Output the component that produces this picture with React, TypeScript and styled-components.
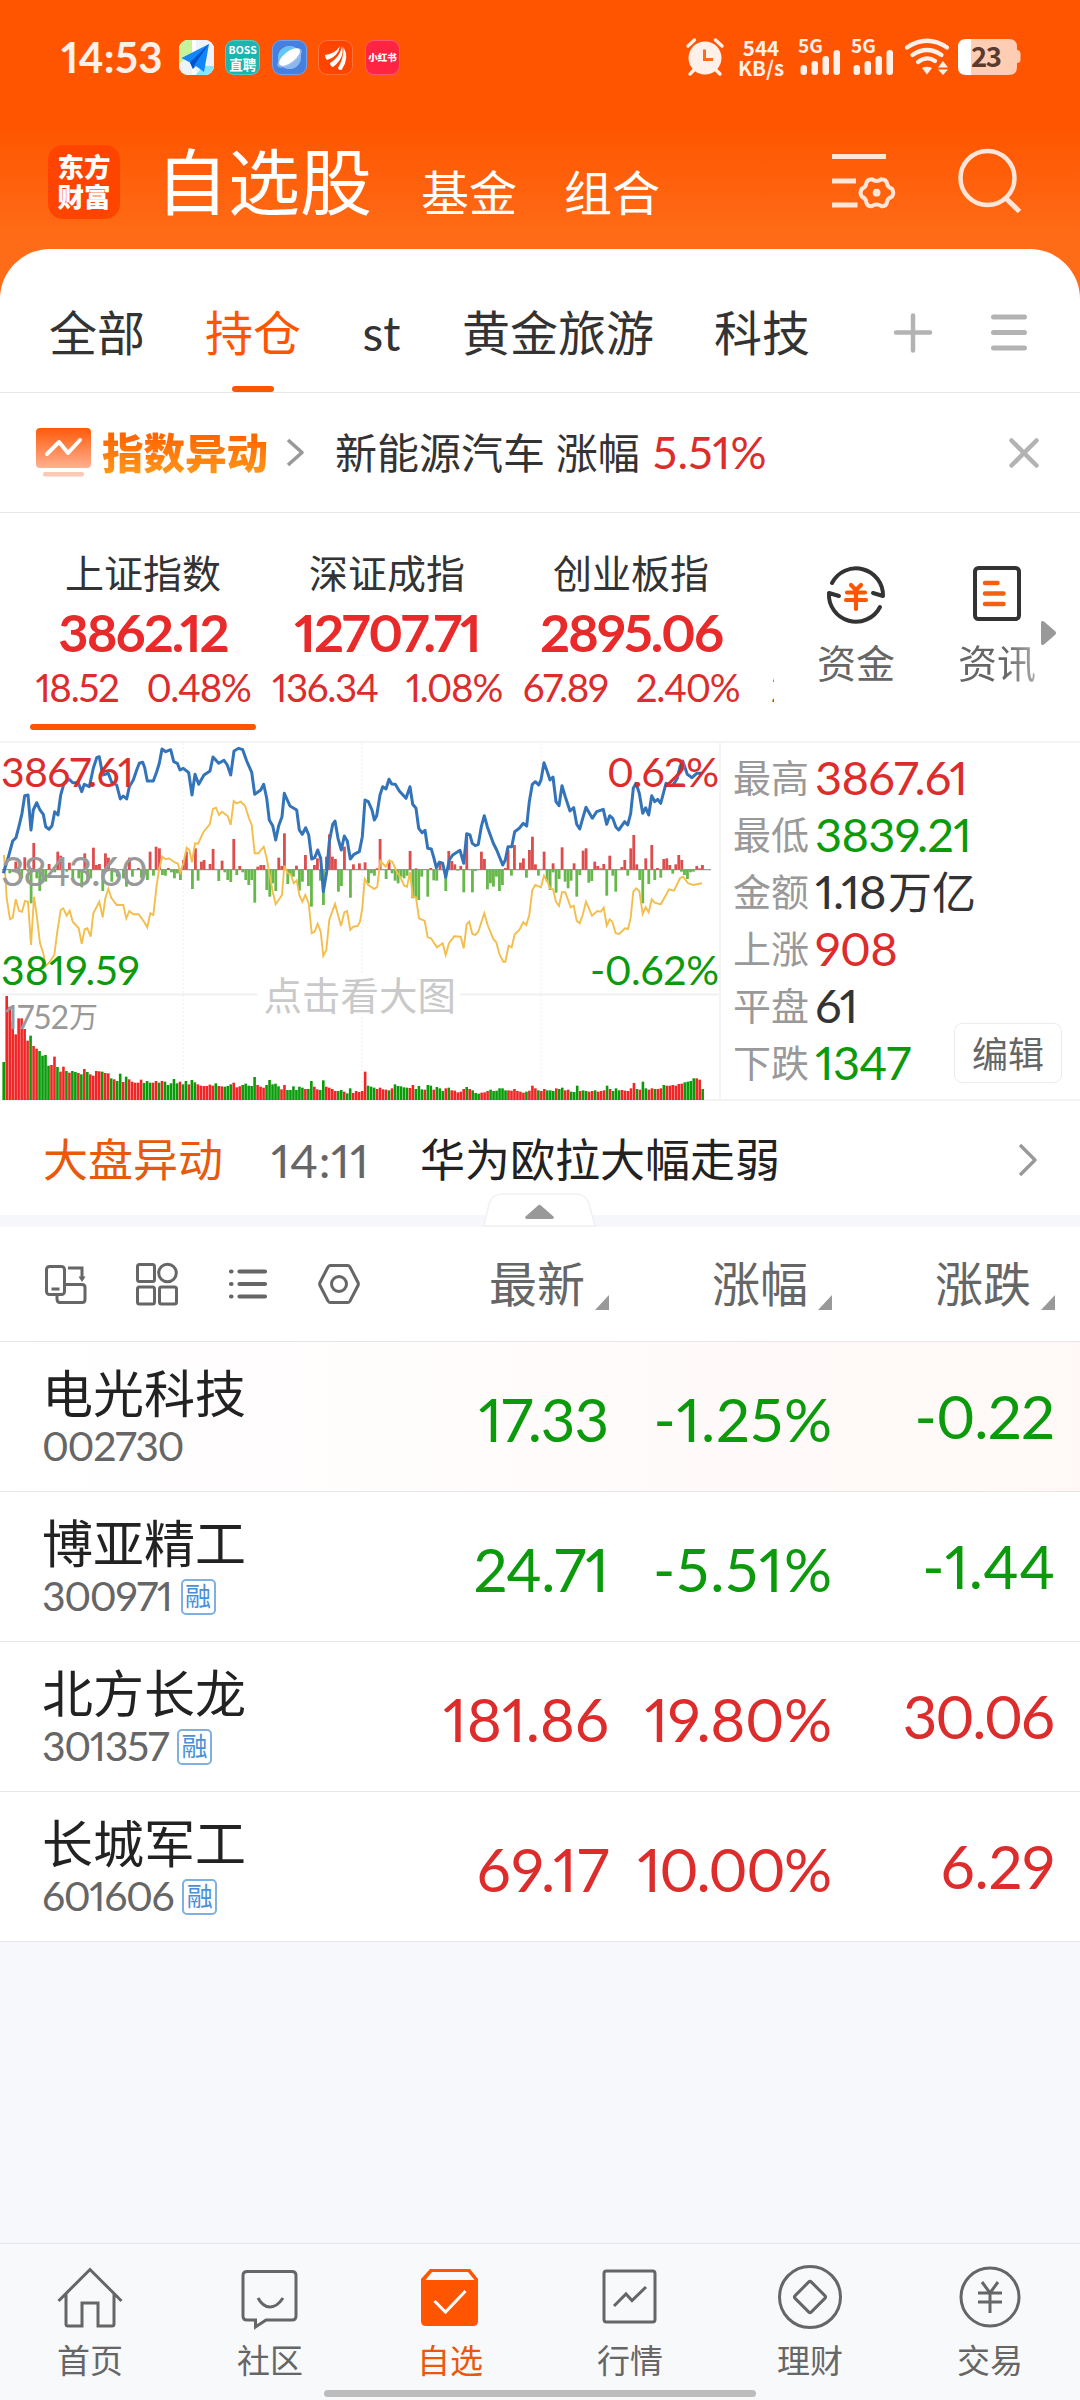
import React from "react";
import styled, { createGlobalStyle, css } from "styled-components";

const RED = "#dd2c2c";
const GREEN = "#0b9a0b";
const ORANGE = "#ff5500";
const INK = "#333333";
const MUTED = "#666666";
const PALE = "#999999";
const LINE = "#e6e6e8";

const GlobalStyle = createGlobalStyle`
  html, body { margin: 0; padding: 0; }
  body {
    width: 1080px;
    background: #f6f8fb;
    font-family: Lato, "Noto Sans CJK SC", sans-serif;
    font-feature-settings: "pnum" 1;
    color: ${INK};
  }
  *, *::before, *::after { box-sizing: border-box; }
  svg { display: block; flex: none; overflow: visible; }
`;

const Screen = styled.div`
  width: 1080px;
  height: 2400px;
  display: flex;
  flex-direction: column;
  overflow: hidden;
  background: #f6f8fb;
`;

const Top = styled.header`
  height: 300px;
  flex: none;
  background: linear-gradient(#ff5500 0, #ff5500 126px, #ff6c17 238px, #ff6c17 100%);
`;

/* ---------- status bar ---------- */

const StatusBar = styled.div`
  height: 114px;
  padding: 0 59px 0 61px;
  display: flex;
  align-items: center;
  justify-content: space-between;
  color: #fff0e9;
`;

const StatusSide = styled.div<{ $gap: number; $ml?: number }>`
  display: flex;
  align-items: center;
  gap: ${(p) => p.$gap}px;
  margin-left: ${(p) => p.$ml ?? 0}px;
`;

const Clock = styled.span`
  font-size: 42px;
  line-height: 48px;
  font-weight: 700;
  width: 106px;
  letter-spacing: 0.2px;
  padding-bottom: 1px;
`;

const AppIcon = styled.div<{ $bg: string }>`
  width: 35px;
  height: 35px;
  flex: none;
  border-radius: 9px;
  overflow: hidden;
  background: ${(p) => p.$bg};
  box-shadow: inset 0 0 0 1px rgba(255, 255, 255, 0.25);
  display: flex;
  flex-direction: column;
  align-items: center;
  justify-content: center;
  color: #fff;
  font-family: "Noto Sans CJK SC", sans-serif;
  white-space: nowrap;
`;

const TinyText = styled.span<{ $size: number; $lh: number; $w?: number }>`
  font-size: ${(p) => p.$size}px;
  line-height: ${(p) => p.$lh}px;
  font-weight: ${(p) => p.$w ?? 700};
`;

const NetSpeed = styled.div`
  width: 44px;
  margin-left: 15px;
  display: flex;
  flex-direction: column;
  align-items: center;
  font-family: "Noto Sans CJK SC", sans-serif;
  font-weight: 700;
  font-size: 20.5px;
  line-height: 20px;
`;

const StatusText = styled.text`
  font-family: "Noto Sans CJK SC", sans-serif;
  font-weight: 700;
`;

/* ---------- title bar ---------- */

const TitleBar = styled.div`
  height: 135px;
  padding: 0 58px 0 48px;
  display: flex;
  align-items: flex-start;
  color: #fff;
`;

const Logo = styled.div`
  width: 72px;
  height: 74px;
  margin-top: 31px;
  border-radius: 15px;
  background: #ff4400;
  display: flex;
  flex-direction: column;
  align-items: center;
  justify-content: center;
  font-family: "Noto Sans CJK SC", sans-serif;
  font-weight: 900;
  font-size: 26.5px;
  line-height: 30px;
  padding-bottom: 2px;
`;

const Heading = styled.h1`
  margin: 27px 0 0 36px;
  font-size: 72px;
  line-height: 80px;
  font-weight: 400;
`;

const TitleLink = styled.a<{ $ml: number }>`
  margin: 49px 0 0 ${(p) => p.$ml}px;
  font-size: 48px;
  line-height: 60px;
`;

const TitleActions = styled.div`
  margin-left: auto;
  padding-top: 34px;
  display: flex;
  gap: 63px;
`;

/* ---------- sheet ---------- */

const Sheet = styled.main`
  margin-top: -51px;
  flex: none;
  background: #fff;
  border-radius: 50px 50px 0 0;
`;

const Tabs = styled.nav`
  height: 144px;
  padding: 0 52px 0 49px;
  display: flex;
  align-items: flex-end;
  gap: 60px;
  border-bottom: 1px solid ${LINE};
`;

const Tab = styled.a<{ $active?: boolean; $w?: number }>`
  height: 111px;
  padding-top: 22px;
  ${(p) => p.$w && `width: ${p.$w}px;`}
  font-size: 48px;
  line-height: 60px;
  white-space: nowrap;
  color: ${(p) => (p.$active ? ORANGE : INK)};
  display: flex;
  flex-direction: column;
  align-items: center;
  ${(p) =>
    p.$active &&
    css`
      &::after {
        content: "";
        width: 42px;
        height: 6px;
        margin-top: auto;
        border-radius: 3px;
        background: ${ORANGE};
      }
    `}
`;

const TabTools = styled.div`
  margin-left: auto;
  height: 79px;
  display: flex;
  gap: 57px;
`;

const Notice = styled.section`
  height: 120px;
  padding: 0 40px 0 36px;
  display: flex;
  align-items: center;
  border-bottom: 1px solid ${LINE};
`;

const NoticeBrand = styled.strong`
  margin: 0 18px 0 9px;
  font-family: "Noto Sans CJK SC", sans-serif;
  font-size: 41.5px;
  line-height: 50px;
  font-weight: 900;
  padding-bottom: 4px;
  background: linear-gradient(#ff6600 20%, #ff9418 85%);
  -webkit-background-clip: text;
  background-clip: text;
  color: transparent;
`;

const NoticeText = styled.p`
  margin: 0 auto 0 31px;
  font-size: 42px;
  line-height: 60px;
  white-space: nowrap;
`;

const NoticeValue = styled.span`
  font-size: 45px;
  letter-spacing: 0.2px;
  margin-left: 13px;
  color: ${RED};
`;

/* ---------- indices ---------- */

const Indices = styled.section`
  height: 228px;
  padding-left: 21px;
  display: flex;
`;

const IndexStrip = styled.div`
  width: 753px;
  display: flex;
  overflow: hidden;
`;

const IndexCard = styled.div<{ $active?: boolean; $clip?: boolean }>`
  width: ${(p) => (p.$clip ? 21 : 244)}px;
  flex: none;
  padding-top: 32px;
  display: flex;
  flex-direction: column;
  align-items: ${(p) => (p.$clip ? "flex-start" : "center")};
  ${(p) =>
    p.$active &&
    css`
      &::after {
        content: "";
        width: 226px;
        height: 6px;
        margin-top: 13px;
        border-radius: 3px;
        background: ${ORANGE};
      }
    `}
`;

const IndexName = styled.span`
  height: 57px;
  font-size: 39px;
  line-height: 56px;
`;

const IndexValue = styled.span`
  height: 60px;
  font-size: 52.5px;
  line-height: 60px;
  font-weight: 700;
  letter-spacing: -2px;
  color: #e92a2a;
`;

const IndexChange = styled.span<{ $ml?: number }>`
  height: 48px;
  margin: 1px 0 0 ${(p) => p.$ml ?? 0}px;
  display: flex;
  gap: 28px;
  font-size: 38.5px;
  line-height: 48px;
  letter-spacing: -1.3px;
  color: ${RED};
`;

const Shortcut = styled.div<{ $ml: number }>`
  width: 80px;
  margin-left: ${(p) => p.$ml}px;
  padding-top: 51px;
  display: flex;
  flex-direction: column;
  align-items: center;
  flex: none;
`;

const ShortcutLabel = styled.span<{ $fade?: boolean }>`
  margin-top: 11px;
  font-size: 39px;
  line-height: 56px;
  color: ${MUTED};
  ${(p) =>
    p.$fade &&
    css`
      background: linear-gradient(90deg, ${MUTED} 60%, #aaa 100%);
      -webkit-background-clip: text;
      background-clip: text;
      color: transparent;
    `}
`;

const MoreArrow = styled.svg`
  margin: 106px 0 0 3px;
`;

/* ---------- chart ---------- */

const Market = styled.section`
  height: 360px;
  display: flex;
  border-top: 2px solid #f4f4f5;
  border-bottom: 2px solid #f4f4f5;
`;

const ChartPane = styled.div`
  width: 721px;
  border-right: 2px solid #f4f4f5;
  flex: none;
`;

const ChartText = styled.text`
  font-family: Lato, "Noto Sans CJK SC", sans-serif;
`;

const Stats = styled.dl`
  margin: 0;
  padding: 6px 0 0 12px;
  width: 220px;
  flex: none;
`;

const Stat = styled.div`
  height: 57px;
  display: flex;
  align-items: center;
  white-space: nowrap;
`;

const StatLabel = styled.dt`
  width: 82px;
  flex: none;
  font-size: 38px;
  line-height: 57px;
  color: ${PALE};
`;

const StatValue = styled.dd<{ $color: string }>`
  margin: 0;
  font-size: 47px;
  line-height: 57px;
  letter-spacing: -0.7px;
  color: ${(p) => p.$color};
`;

const Unit = styled.span`
  font-size: 44px;
  letter-spacing: 0;
  margin-left: 2px;
`;

const EditButton = styled.button`
  margin: auto 18px 16px auto;
  width: 108px;
  height: 60px;
  padding: 1px 0 0;
  border: 1px solid #ececee;
  border-radius: 8px;
  background: #fff;
  font: inherit;
  font-size: 36px;
  line-height: 56px;
  color: ${MUTED};
`;

const Flash = styled.section`
  position: relative;
  height: 126px;
  padding: 4px 43px 0 43px;
  display: flex;
  align-items: center;
  font-size: 45px;
  line-height: 60px;
  border-bottom: 12px solid #f5f7fa;
`;

const FlashTag = styled.span`
  width: 228px;
  color: #e8590c;
`;

const FlashTime = styled.span`
  width: 149px;
  font-size: 47px;
  letter-spacing: 0.5px;
  color: ${MUTED};
`;

const FlashText = styled.span`
  margin-right: auto;
  color: #222;
`;

const Handle = styled.svg`
  position: absolute;
  left: 482px;
  top: 91px;
`;

/* ---------- watch list ---------- */

const GridRow = styled.div`
  display: grid;
  grid-template-columns: 386px 223px 223px 223px;
`;

const ListHead = styled(GridRow)`
  height: 115px;
  align-items: center;
  border-bottom: 1px solid ${LINE};
`;

const ViewTools = styled.div`
  padding: 0 0 0 45px;
  display: flex;
  align-items: center;
  gap: 49px;
`;

const SortLabel = styled.div`
  display: flex;
  justify-content: flex-end;
  align-items: center;
  gap: 10px;
  font-size: 48px;
  line-height: 60px;
  color: ${MUTED};
`;

const SortMark = styled.svg`
  margin-top: 36px;
`;

const StockRow = styled(GridRow)<{ $tint?: boolean }>`
  height: 150px;
  border-bottom: 1px solid ${LINE};
  background: ${(p) => (p.$tint ? "linear-gradient(90deg, #fff 0%, #fff8f7 100%)" : "#fff")};
`;

const StockId = styled.div`
  padding: 22px 0 0 42px;
`;

const StockName = styled.div`
  font-size: 51px;
  line-height: 60px;
  color: #222;
`;

const StockCode = styled.div`
  height: 44px;
  display: flex;
  align-items: center;
  gap: 9px;
  font-size: 41px;
  line-height: 44px;
  letter-spacing: -1.4px;
  color: ${MUTED};
`;

const MarginTag = styled.span`
  width: 35px;
  height: 36px;
  margin-top: 1px;
  border: 2px solid #7fb0e0;
  border-radius: 5px;
  font-size: 26px;
  line-height: 31px;
  letter-spacing: 0;
  text-align: center;
  color: #4a90d6;
`;

const Figure = styled.div<{ $up: boolean; $track: number; $lift?: boolean }>`
  padding-top: ${(p) => (p.$lift ? 38 : 41)}px;
  margin-right: ${(p) => -p.$track}px;
  text-align: right;
  font-size: 60px;
  line-height: 72px;
  letter-spacing: ${(p) => p.$track}px;
  color: ${(p) => (p.$up ? RED : GREEN)};
`;

/* ---------- bottom navigation ---------- */

const BottomNav = styled.nav`
  margin-top: auto;
  height: 157px;
  flex: none;
  display: grid;
  grid-template-columns: repeat(6, 180px);
  border-top: 1px solid ${LINE};
  background: #f8f9fb;
  position: relative;
`;

const NavItem = styled.a<{ $active?: boolean }>`
  padding-top: 17px;
  display: flex;
  flex-direction: column;
  align-items: center;
  font-size: 33px;
  line-height: 44px;
  gap: 9px;
  color: ${(p) => (p.$active ? "#e8590c" : MUTED)};
`;

const HomeBar = styled.div`
  position: absolute;
  left: 324px;
  bottom: 3px;
  width: 432px;
  height: 7px;
  border-radius: 4px;
  background: #bcbcbc;
`;

/* ---------- intraday data, in thirds of a pixel ---------- */

const PRICE =
  "10,415 24,370 38,318 48,308 58,270 66,235 74,182 84,180 93,285 100,225 110,203 120,225 130,238 137,275 147,283 156,272 164,230 174,240 182,180 192,145 208,133 218,143 235,143 245,170 253,148 268,155 280,100 290,68 298,65 308,120 325,115 335,142 350,150 361,192 370,183 380,192 388,155 400,135 410,105 418,85 428,82 434,98 442,138 460,138 470,110 478,85 486,42 497,50 512,44 521,80 532,85 540,105 550,100 566,113 576,180 585,118 596,148 612,120 630,108 639,66 656,85 672,76 682,90 692,120 702,48 716,40 728,44 740,78 755,112 764,178 782,165 791,148 800,190 808,255 818,272 827,315 836,272 846,245 853,175 870,213 890,225 898,285 907,298 917,278 926,300 935,372 944,368 953,345 962,370 970,470 980,410 988,320 998,268 1005,258 1014,310 1024,345 1033,303 1042,318 1051,372 1062,358 1078,350 1087,305 1095,195 1105,200 1116,225 1123,255 1130,242 1140,180 1148,155 1158,162 1167,133 1175,147 1186,148 1198,168 1218,190 1230,155 1238,208 1248,220 1256,280 1266,293 1275,286 1283,340 1294,342 1302,370 1309,398 1318,382 1328,385 1337,427 1348,375 1358,360 1380,346 1391,385 1400,296 1410,300 1417,325 1426,332 1435,328 1444,275 1453,242 1462,275 1480,325 1490,345 1508,390 1516,375 1524,335 1535,335 1544,290 1558,280 1570,265 1580,273 1588,200 1597,148 1606,140 1616,150 1623,135 1632,83 1640,105 1650,135 1659,126 1668,200 1677,212 1686,152 1696,185 1710,228 1721,218 1730,268 1739,282 1748,250 1758,217 1777,250 1790,230 1810,223 1820,268 1829,242 1838,250 1848,277 1856,285 1874,260 1883,270 1892,235 1900,160 1908,145 1918,175 1928,235 1937,218 1946,240 1955,182 1964,200 1973,193 1982,205 1998,145 2018,152 2032,130 2040,95 2048,78 2062,118 2076,128 2090,115 2106,115";

const LEAD =
  "12,360 20,490 30,553 38,548 47,493 57,527 66,530 75,498 84,500 93,630 102,485 110,540 120,625 130,655 137,693 147,683 163,660 172,590 182,525 190,520 200,542 209,527 218,560 236,580 245,626 254,583 262,580 272,605 280,535 298,500 308,547 316,490 325,462 334,488 350,510 370,510 379,550 388,528 400,538 416,538 432,560 442,577 451,535 460,540 470,450 478,400 487,365 497,373 507,370 525,383 533,385 541,412 550,385 560,338 568,345 576,382 585,325 594,326 611,290 629,268 639,222 648,218 657,240 666,230 683,243 692,270 701,198 710,205 722,200 735,212 747,250 755,270 764,355 775,355 791,335 800,370 818,470 827,508 846,480 853,392 863,415 872,418 881,445 890,436 898,480 907,500 916,480 926,505 935,595 944,590 953,566 962,590 970,662 979,645 988,555 1005,507 1023,573 1033,532 1041,528 1051,585 1060,575 1073,573 1080,560 1087,520 1094,432 1105,450 1123,462 1132,455 1141,378 1157,395 1168,376 1177,380 1190,410 1200,425 1213,452 1221,455 1230,412 1238,485 1248,487 1257,550 1274,558 1283,607 1293,610 1311,637 1328,625 1337,660 1347,625 1363,604 1382,605 1391,640 1400,568 1408,560 1417,597 1426,600 1435,590 1453,535 1463,570 1480,612 1489,622 1498,657 1510,680 1516,680 1526,632 1535,637 1544,598 1558,585 1570,562 1579,570 1588,540 1597,465 1606,450 1623,457 1632,422 1641,437 1650,460 1659,463 1668,500 1677,513 1686,472 1696,472 1712,517 1721,512 1730,557 1739,565 1748,540 1758,500 1776,542 1792,528 1802,530 1811,518 1820,572 1829,553 1837,560 1847,595 1858,597 1875,580 1884,582 1892,548 1900,470 1909,460 1918,468 1928,537 1937,517 1946,532 1955,493 1964,503 1982,508 1995,485 2007,463 2022,467 2040,430 2049,425 2064,445 2080,450 2106,445";

const UPS =
  "47,380 74,367 101,324 147,387 173,350 182,362 208,383 254,355 280,338 289,390 298,387 316,355 325,368 388,368 415,399 450,350 468,335 478,340 505,399 550,375 559,350 586,340 604,380 612,375 630,387 639,342 666,377 701,312 719,393 773,395 782,390 791,390 836,368 845,393 853,295 889,392 916,360 943,390 952,370 979,365 988,298 997,365 1006,372 1033,335 1060,388 1078,385 1095,382 1131,400 1140,312 1167,378 1230,348 1248,400 1292,399 1320,385 1346,348 1355,378 1364,388 1382,393 1400,305 1444,350 1453,372 1516,399 1524,345 1543,330 1561,383 1570,370 1588,345 1597,305 1606,388 1632,350 1659,385 1686,337 1722,385 1749,347 1758,340 1784,380 1793,393 1802,400 1811,387 1829,362 1865,396 1874,375 1892,340 1901,300 1910,388 1937,370 1955,330 1972,399 1991,372 2000,370 2009,390 2027,388 2036,360 2045,375 2090,393 2099,400 2107,390";

const DOWNS =
  "29,415 56,415 65,430 84,410 93,505 110,430 119,468 128,425 137,440 164,412 200,410 218,430 236,430 245,457 263,435 272,430 308,468 335,440 344,412 352,425 370,430 379,455 397,425 424,428 433,418 442,435 460,422 487,420 496,422 514,412 523,430 532,415 541,435 577,462 594,437 656,438 674,412 683,435 692,441 710,420 728,412 737,435 746,450 755,435 764,503 800,465 809,485 818,445 827,468 863,447 871,420 880,425 898,467 907,440 925,453 934,515 961,437 970,510 1015,470 1024,453 1051,488 1105,445 1114,415 1123,422 1158,432 1176,415 1185,437 1194,445 1203,425 1212,430 1221,422 1238,490 1247,487 1256,495 1265,425 1283,485 1301,436 1310,437 1337,468 1373,407 1391,472 1417,472 1426,408 1462,463 1471,445 1480,455 1489,425 1498,468 1507,450 1534,422 1579,428 1615,422 1641,440 1650,465 1659,412 1668,473 1677,432 1695,440 1704,460 1713,437 1730,485 1739,420 1766,443 1775,438 1820,482 1838,422 1847,470 1883,422 1919,435 1928,505 1946,447 1964,435 1982,428 2018,416 2044,410 2053,420 2062,432 2071,412 2080,410";

const VOLUME = [
  981, 783, 815, 860, 898, 850, 850, 882, 917, 902, 933, 941, 948, 962, 960, 992, 990, 965, 996, 1010, 995, 1008, 1013,
  1008, 1011, 1014, 1018, 1002, 1011, 1018, 1022, 1008, 1009, 1010, 1014, 1015, 1030, 1033, 1038, 1016, 1041, 1025,
  1033, 1040, 1043, 1043, 1034, 1044, 1038, 1043, 1043, 1038, 1043, 1038, 1040, 1050, 1045, 1032, 1045, 1040, 1048,
  1038, 1048, 1035, 1042, 1048, 1052, 1053, 1053, 1049, 1052, 1045, 1053, 1054, 1055, 1053, 1048, 1043, 1057, 1054,
  1050, 1046, 1052, 1053, 1026, 1050, 1055, 1058, 1050, 1035, 1048, 1046, 1054, 1063, 1050, 1065, 1065, 1054, 1065,
  1055, 1058, 1062, 1062, 1038, 1055, 1063, 1065, 1036, 1055, 1058, 1062, 1068, 1068, 1065, 1070, 1075, 1060, 1074,
  1068, 1071, 1068, 1010, 1052, 1055, 1058, 1062, 1058, 1063, 1064, 1066, 1060, 1048, 1053, 1054, 1057, 1058, 1059,
  1050, 1062, 1053, 1063, 1064, 1050, 1052, 1064, 1056, 1060, 1068, 1060, 1058, 1066, 1067, 1072, 1070, 1062,
  1056, 1062, 1066, 1074, 1076, 1073, 1072, 1068, 1064, 1068, 1067, 1060, 1060, 1066, 1066, 1067, 1062, 1068,
  1070, 1073, 1070, 1067, 1052, 1060, 1066, 1068, 1062, 1066, 1066, 1068, 1060, 1062, 1058, 1066, 1064, 1070, 1071,
  1052, 1068, 1066, 1068, 1070, 1068, 1066, 1070, 1068, 1066, 1052, 1062, 1068, 1060, 1066, 1065, 1067, 1068,
  1060, 1044, 1062, 1064, 1040, 1060, 1064, 1060, 1062, 1062, 1060, 1050, 1052, 1052, 1050, 1052, 1047, 1046, 1042,
  1040, 1038, 1030, 1030, 1034, 1062,
];

/* run lengths of falling (g) and rising (r) minutes */
const VOLUME_RUNS =
  "g1 r8 g1 r2 g4 r2 g1 r2 g1 r1 g2 r1 g1 r1 g1 r4 g1 r2 g1 r1 g2 r1 g1 r5 g3 r2 g1 r1 g5 r1 g2 r1 g2 r6 g1 r2 g3 r3 g5 r3 g5 r2 g6 r1 g2 r2 g2 r4 g2 r1 g2 r5 g3 r4 g1 r1 g5 r2 g3 r1 g2 r1 g3 r1 g1 r5 g1 r1 g3 r3 g6 r6 g1 r3 g1 r2 g3 r1 g2 r2 g3 r1 g2 r2 g1 r3 g1 r1 g3 r5 g1 r1 g2 r2 g1 r2 g1 r6 g4 r2 g1";

const VOLUME_SIDE = VOLUME_RUNS.split(" ")
  .map((run) => run[0].repeat(Number(run.slice(1))))
  .join("");

const parse = (s: string) => s.split(" ").map((p) => p.split(",").map((n) => Number(n) / 3));
const line = (s: string) =>
  parse(s)
    .map(([x, y]) => `${x.toFixed(1)},${(y - 8).toFixed(1)}`)
    .join(" ");

const ZERO = 126.6;

const IntradayChart = () => (
  <svg width="719" height="356" viewBox="0 0 719 356">
    <g stroke="#eeeeef" strokeDasharray="2 2">
      <path d="M183 0V356M362 0V232M362 274V356M541 0V356" />
    </g>
    <path d="M1 251.5H257M460 251.5H719" stroke="#f0f0f1" strokeWidth="2" />
    <path d={`M2 ${ZERO}H711`} stroke="#999" strokeWidth="1.4" />
    {parse(UPS).map(([x, y]) => (
      <rect key={x} x={x - 1.3} y={y - 8} width="2.8" height={ZERO - y + 8} fill="#de4c4c" />
    ))}
    {parse(DOWNS).map(([x, y]) => (
      <rect key={x} x={x - 1.3} y={ZERO} width="2.8" height={y - 8 - ZERO} fill="#66b84a" />
    ))}
    {VOLUME.map((top, i) => {
      const y = top / 3 - 8;
      return (
        <rect
          key={i}
          x={2.4 + i * 2.987}
          y={y}
          width="2.6"
          height={357 - y}
          fill={VOLUME_SIDE[i] === "g" ? "#089c08" : "#f02626"}
        />
      );
    })}
    <polyline points={line(LEAD)} fill="none" stroke="#f3be4c" strokeWidth="1.9" />
    <polyline points={line(PRICE)} fill="none" stroke="#3373b9" strokeWidth="3" strokeLinejoin="round" />
    <ChartText x="1" y="43.5" fontSize="41" fill={RED} textLength="133">3867.61</ChartText>
    <ChartText x="1" y="142.5" fontSize="41" fill={PALE} textLength="147">3843.60</ChartText>
    <ChartText x="1" y="242" fontSize="41" fill={GREEN} textLength="139">3819.59</ChartText>
    <ChartText x="607" y="43.5" fontSize="41" fill={RED} textLength="112">0.62%</ChartText>
    <ChartText x="590" y="242" fontSize="41" fill={GREEN} textLength="129">-0.62%</ChartText>
    <ChartText x="5" y="285.5" fontSize="32" fill={PALE} textLength="64">1752</ChartText>
    <ChartText x="69" y="284.5" fontSize="29" fill={PALE}>万</ChartText>
    <ChartText x="263.5" y="267" fontSize="38.5" fill="#c9c9c9">点击看大图</ChartText>
  </svg>
);

/* ---------- icons ---------- */

const SignalIcon = () => (
  <svg width="44" height="38" viewBox="0 0 44 38" fill="#fff0e9">
    <StatusText x="0" y="15" fontSize="19">5G</StatusText>
    <rect x="2.5" y="27" width="6.5" height="10" rx="3" />
    <rect x="13.5" y="23" width="6.5" height="14" rx="3" />
    <rect x="24.5" y="18" width="6.5" height="19" rx="3" />
    <rect x="35.5" y="12" width="6.5" height="25" rx="3" />
  </svg>
);

const AlarmIcon = () => (
  <svg width="38" height="38" viewBox="0 0 38 38">
    <circle cx="19" cy="20" r="16.5" fill="#fff0e9" />
    <path d="M2 8L8.5 2M36 8L29.5 2M4 36L9 31M34 36L29 31" stroke="#fff0e9" strokeWidth="3.4" strokeLinecap="round" />
    <path d="M18.5 11.500V21.500H27" stroke="#ff6a20" strokeWidth="3" fill="none" />
  </svg>
);

const WifiIcon = () => (
  <svg width="46" height="38" viewBox="0 0 46 38" fill="none" stroke="#fff0e9" strokeWidth="4.200" strokeLinecap="round">
    <path d="M3 9.500Q23 -4 43 9.500M8.500 17Q23 7 37.500 17M14 24Q23 17.500 31 23" />
    <path d="M18 30Q23 27.500 28 30L23 36.500Z" fill="#fff0e9" stroke="none" />
    <path d="M39 23L44 29.500H34ZM39 37L34 31.500H44Z" fill="#fff0e9" stroke="none" />
  </svg>
);

const BatteryIcon = () => (
  <svg width="64" height="38" viewBox="0 0 64 38">
    <path d="M9 1H52Q60 1 60 9V12Q63.500 12 63.500 16V22Q63.500 25 60 25V29Q60 37 52 37H9Z" fill="#ffccb4" />
    <path d="M9 1H14V37H9Q1 37 1 29V9Q1 1 9 1Z" fill="#fff" />
    <StatusText x="14" y="29" fontSize="27.500" fill="#5a3a2c" textLength="31">23</StatusText>
  </svg>
);

const MapAppIcon = () => (
  <svg width="35" height="35" viewBox="0 0 35 35">
    <rect width="35" height="35" fill="#eef3f7" />
    <path d="M0 0H13V14L0 24Z" fill="#c6f39a" />
    <path d="M24 26H35V35H17Z" fill="#86e6ff" />
    <path d="M13 0H17V35H13Z" fill="#fff" />
    <path d="M30 4L2.500 18L11 22.500L14 29L17 26L25 32Z" fill="#1186fb" />
    <path d="M30 4L11 22.500L14 29L16 24Z" fill="#0553c8" />
  </svg>
);

const PlanetAppIcon = () => (
  <svg width="35" height="35" viewBox="0 0 35 35">
    <circle cx="17.500" cy="17.500" r="11.500" fill="#8cb8ee" />
    <path d="M6.500 20A11.500 11.500 0 0 1 28 12.500Z" fill="#62c8f2" />
    <ellipse cx="17.500" cy="18" rx="14.500" ry="6" transform="rotate(-35 17.500 18)" fill="#a4c4f0" opacity=".7" />
    <ellipse cx="17.500" cy="17" rx="12.500" ry="5.500" transform="rotate(-38 17.500 17)" fill="#fff" />
  </svg>
);

const WingAppIcon = () => (
  <svg width="35" height="35" viewBox="0 0 35 35" fill="#fff">
    <path d="M7 15Q17 14 22 6Q20 17 9 20Q7 18 7 15Z" />
    <path d="M12 23Q22 17 24 6Q27 18 15 27Q12 26 12 23Z" />
    <path d="M20 28Q26 18 25.500 7Q32 18 23.500 30Q20 30 20 28Z" />
  </svg>
);

const FilterIcon = () => (
  <svg width="64" height="60" viewBox="0 0 64 60" fill="none" stroke="#ffe6d9" strokeWidth="5">
    <path d="M1 8.500H55M1 33H25M1 57H26.500" />
    <path
      d="M41 31Q46 34.500 51 31Q56 31 57 36Q57 39 62 41Q64.500 45 62 49Q57 51 57 54Q56 59.500 51 59Q46 55.500 41 59Q36 59.500 35 54Q35 51 30.500 49Q28 45 30.500 41Q35 39 35 36Q36 31 41 31Z"
      transform="translate(1.500 1.500) scale(.96)"
      strokeWidth="4.200"
      strokeLinejoin="round"
    />
    <circle cx="45.600" cy="44.700" r="3.900" fill="#ffe6d9" stroke="none" />
  </svg>
);

const SearchIcon = () => (
  <svg width="64" height="66" viewBox="0 0 64 66" fill="none" stroke="#ffe6d9" strokeWidth="4.500">
    <ellipse cx="29.500" cy="30" rx="27" ry="27" />
    <path d="M47 49.500L61.500 63.500" strokeWidth="5" />
  </svg>
);

const NoticeIcon = () => (
  <svg width="57" height="52" viewBox="0 0 57 52">
    <defs>
      <linearGradient id="nb" x1="0" y1="0" x2="0" y2="1">
        <stop offset="0" stopColor="#ff5a0a" />
        <stop offset="1" stopColor="#ffb090" />
      </linearGradient>
    </defs>
    <rect x="0" y="1" width="55" height="40" rx="4" fill="url(#nb)" />
    <path d="M11 27L23 15L32 26L44 13" fill="none" stroke="#fff" strokeWidth="4" strokeLinecap="round" strokeLinejoin="round" />
    <rect x="7" y="45" width="41" height="4.500" rx="2" fill="#fbcab4" />
  </svg>
);

const Chevron = ({ w, h, sw }: { w: number; h: number; sw: number }) => (
  <svg width={w} height={h} viewBox={`0 0 ${w} ${h}`} fill="none" stroke="#999" strokeWidth={sw} strokeLinejoin="round">
    <path d={`M2 2L${w - 2} ${h / 2}L2 ${h - 2}`} />
  </svg>
);

const stroke = { fill: "none", stroke: MUTED, strokeWidth: 3 } as const;

type Fig = [string, number];
const STOCKS: { name: string; code: string; tag: boolean; up: boolean; figures: Fig[] }[] = [
  { name: "电光科技", code: "002730", tag: false, up: false, figures: [["17.33", -1], ["-1.25%", 0.7], ["-0.22", -0.7]] },
  { name: "博亚精工", code: "300971", tag: true, up: false, figures: [["24.71", -0.7], ["-5.51%", 1.2], ["-1.44", 0.2]] },
  { name: "北方长龙", code: "301357", tag: true, up: true, figures: [["181.86", 0], ["19.80%", -0.5], ["30.06", -2.1]] },
  { name: "长城军工", code: "601606", tag: true, up: true, figures: [["69.17", 0.5], ["10.00%", -1.7], ["6.29", -0.2]] },
];

const App = () => (
  <Screen>
    <GlobalStyle />
    <Top>
      <StatusBar>
        <StatusSide $gap={11.6}>
          <Clock>14:53</Clock>
          <AppIcon $bg="#eef3f7"><MapAppIcon /></AppIcon>
          <AppIcon $bg="#1bb5b0">
            <TinyText $size={10.5} $lh={13}>BOSS</TinyText>
            <TinyText $size={13.5} $lh={16}>直聘</TinyText>
          </AppIcon>
          <AppIcon $bg="#4580e0"><PlanetAppIcon /></AppIcon>
          <AppIcon $bg="#ff4400"><WingAppIcon /></AppIcon>
          <AppIcon $bg="#ff2442"><TinyText $size={9.5} $lh={14} $w={900}>小红书</TinyText></AppIcon>
        </StatusSide>
        <StatusSide $gap={0}>
          <AlarmIcon />
          <NetSpeed>
            <span>544</span>
            <span>KB/s</span>
          </NetSpeed>
          <StatusSide $gap={9} $ml={15}>
            <SignalIcon />
            <SignalIcon />
            <WifiIcon />
          </StatusSide>
          <StatusSide $gap={0} $ml={7}>
            <BatteryIcon />
          </StatusSide>
        </StatusSide>
      </StatusBar>
      <TitleBar>
        <Logo>
          <span>东方</span>
          <span>财富</span>
        </Logo>
        <Heading>自选股</Heading>
        <TitleLink $ml={49}>基金</TitleLink>
        <TitleLink $ml={47}>组合</TitleLink>
        <TitleActions>
          <FilterIcon />
          <SearchIcon />
        </TitleActions>
      </TitleBar>
    </Top>

    <Sheet>
      <Tabs>
        <Tab>全部</Tab>
        <Tab $active>持仓</Tab>
        <Tab $w={41}>st</Tab>
        <Tab>黄金旅游</Tab>
        <Tab>科技</Tab>
        <TabTools>
          <svg width="40" height="40" viewBox="0 0 40 40" stroke="#b3b3b3" strokeWidth="4.500" strokeLinecap="round">
            <path d="M20 2.500V37.500M3 19.500H37" />
          </svg>
          <svg width="38" height="40" viewBox="0 0 38 40" stroke="#b3b3b3" strokeWidth="5" strokeLinecap="round">
            <path d="M3.500 4H34.500M3.500 19.500H34.500M3.500 35H34.500" />
          </svg>
        </TabTools>
      </Tabs>

      <Notice>
        <NoticeIcon />
        <NoticeBrand>指数异动</NoticeBrand>
        <Chevron w={18} h={29} sw={3.6} />
        <NoticeText>
          新能源汽车 涨幅<NoticeValue>5.51%</NoticeValue>
        </NoticeText>
        <svg width="32" height="32" viewBox="0 0 32 32" stroke="#b3b3b3" strokeWidth="4.500" strokeLinecap="round">
          <path d="M3.500 3.500L28.500 28.500M28.500 3.500L3.500 28.500" />
        </svg>
      </Notice>

      <Indices>
        <IndexStrip>
          <IndexCard $active>
            <IndexName>上证指数</IndexName>
            <IndexValue>3862.12</IndexValue>
            <IndexChange><span>18.52</span><span>0.48%</span></IndexChange>
          </IndexCard>
          <IndexCard>
            <IndexName>深证成指</IndexName>
            <IndexValue>12707.71</IndexValue>
            <IndexChange><span>136.34</span><span>1.08%</span></IndexChange>
          </IndexCard>
          <IndexCard>
            <IndexName>创业板指</IndexName>
            <IndexValue>2895.06</IndexValue>
            <IndexChange><span>67.89</span><span>2.40%</span></IndexChange>
          </IndexCard>
          <IndexCard $clip>
            <IndexName />
            <IndexValue />
            <IndexChange $ml={18}>2</IndexChange>
          </IndexCard>
        </IndexStrip>
        <Shortcut $ml={42}>
          <svg width="60" height="60" viewBox="0 0 60 60" fill="none" stroke="#333" strokeWidth="4" strokeLinecap="round" strokeLinejoin="round">
            <path d="M6 19A27 27 0 0 1 57 32L47 29" />
            <path d="M54 43A27 27 0 0 1 3 29L13 32" />
            <path d="M25 21L30 26L35 21M21 28.500H39M20 36H40M30 27V45" stroke={ORANGE} strokeWidth="4.200" />
          </svg>
          <ShortcutLabel>资金</ShortcutLabel>
        </Shortcut>
        <Shortcut $ml={61}>
          <svg width="50" height="60" viewBox="0 0 50 60" fill="none" stroke="#333" strokeWidth="4" strokeLinecap="round">
            <rect x="3" y="4" width="44" height="51" rx="3.500" />
            <path d="M13 19H25.500M13 29.500H31.500M13 40H31.500" stroke="#f26015" strokeWidth="4.500" />
          </svg>
          <ShortcutLabel $fade>资讯</ShortcutLabel>
        </Shortcut>
        <MoreArrow width="17" height="28" viewBox="0 0 17 28">
          <path d="M1 4Q1 1 4 2.500L15 12Q17 14 15 16L4 25.500Q1 27 1 24Z" fill="#999" />
        </MoreArrow>
      </Indices>

      <Market>
        <ChartPane><IntradayChart /></ChartPane>
        <Stats>
          <Stat><StatLabel>最高</StatLabel><StatValue $color={RED}>3867.61</StatValue></Stat>
          <Stat><StatLabel>最低</StatLabel><StatValue $color={GREEN}>3839.21</StatValue></Stat>
          <Stat><StatLabel>金额</StatLabel><StatValue $color={INK}>1.18<Unit>万亿</Unit></StatValue></Stat>
          <Stat><StatLabel>上涨</StatLabel><StatValue $color={RED}>908</StatValue></Stat>
          <Stat><StatLabel>平盘</StatLabel><StatValue $color={INK}>61</StatValue></Stat>
          <Stat><StatLabel>下跌</StatLabel><StatValue $color={GREEN}>1347</StatValue></Stat>
        </Stats>
        <EditButton>编辑</EditButton>
      </Market>

      <Flash>
        <FlashTag>大盘异动</FlashTag>
        <FlashTime>14:11</FlashTime>
        <FlashText>华为欧拉大幅走弱</FlashText>
        <Chevron w={19} h={34} sw={3.4} />
        <Handle width="116" height="36" viewBox="0 0 116 36">
          <path d="M2 34L7 12Q10 2 20 2H94Q104 2 107 12L113 34Z" fill="#fff" stroke="#f0f1f3" strokeWidth="1.500" />
          <path d="M43 25L56 13.500Q57.500 12 59 13.500L72 25Q72 27 70 27H45Q43 27 43 25Z" fill="#999" />
        </Handle>
      </Flash>

      <ListHead>
        <ViewTools>
          <svg width="42" height="42" viewBox="0 0 42 42" {...stroke}>
            <rect x="1.500" y="3.500" width="18" height="28" rx="3" />
            <path d="M6.500 26H14.500M12 33V36Q12 39.500 15 39.500H37Q40 39.500 40 36.500V24.500Q40 21.500 37 21.500H20M23 5H37V15" />
            <path d="M33.500 13.500H40.500L37 19Z" fill={MUTED} stroke="none" />
          </svg>
          <svg width="42" height="44" viewBox="0 0 42 44" {...stroke}>
            <rect x="1.500" y="2.500" width="17" height="17" rx="2" />
            <circle cx="31.500" cy="11" r="8.800" />
            <rect x="1.500" y="25" width="17" height="17" rx="2" />
            <rect x="23.500" y="25" width="17" height="17" rx="2" />
          </svg>
          <svg width="42" height="42" viewBox="0 0 42 42" {...stroke} strokeWidth={4.2} strokeLinecap="round">
            <path d="M4 8.500H4.500M12.500 8.500H38M4 21H4.500M12.500 21H38M4 33.500H4.500M12.500 33.500H38" />
          </svg>
          <svg width="42" height="42" viewBox="0 0 42 42" {...stroke}>
            <path d="M12.500 2.500H29.500Q31 2.500 32 4L40 19.500Q40.700 21 40 22.500L32 38Q31 39.500 29.500 39.500H12.500Q11 39.500 10 38L2 22.500Q1.300 21 2 19.500L10 4Q11 2.500 12.500 2.500Z" />
            <circle cx="21" cy="21" r="7.500" />
          </svg>
        </ViewTools>
        {["最新", "涨幅", "涨跌"].map((label) => (
          <SortLabel key={label}>
            {label}
            <SortMark width="14" height="15" viewBox="0 0 14 15"><path d="M14 0V15H0Z" fill={PALE} /></SortMark>
          </SortLabel>
        ))}
      </ListHead>

      {STOCKS.map((s, i) => (
        <StockRow key={s.code} $tint={i === 0}>
          <StockId>
            <StockName>{s.name}</StockName>
            <StockCode>
              {s.code}
              {s.tag && <MarginTag>融</MarginTag>}
            </StockCode>
          </StockId>
          {s.figures.map(([value, track], k) => (
            <Figure key={value} $up={s.up} $track={track} $lift={k === 2}>{value}</Figure>
          ))}
        </StockRow>
      ))}
    </Sheet>

    <BottomNav>
      <NavItem>
        <svg width="66" height="68" viewBox="0 0 66 68" {...stroke}>
          <path d="M1.500 40L33 8.500L64.500 40M9 33V63Q9 65 11 65H25V42H41V65H55Q57 65 57 63V33" />
        </svg>
        首页
      </NavItem>
      <NavItem>
        <svg width="66" height="68" viewBox="0 0 66 68" {...stroke}>
          <path d="M9 10.500H55Q59 10.500 59 14.500V55Q59 59 55 59H29L18.500 66V59H10Q6 59 6 55V14.500Q6 10.500 10 10.500" />
          <path d="M21 37Q26 46 33 46T46 37" />
        </svg>
        社区
      </NavItem>
      <NavItem $active>
        <svg width="66" height="68" viewBox="0 0 66 68">
          <path d="M13 8H53L61 18V60Q61 65 56 65H9Q4 65 4 60V18Z" fill={ORANGE} />
          <path d="M15 11H51L57.500 19H8.500Z" fill="#f8f9fb" />
          <path d="M17.500 40L28.500 51L48.500 30" fill="none" stroke="#fff" strokeWidth="3" />
        </svg>
        自选
      </NavItem>
      <NavItem>
        <svg width="66" height="68" viewBox="0 0 66 68" {...stroke}>
          <rect x="7" y="10" width="51" height="51" rx="2.500" />
          <path d="M17 45L29 33L35 39.500L49 26" />
        </svg>
        行情
      </NavItem>
      <NavItem>
        <svg width="66" height="68" viewBox="0 0 66 68" {...stroke}>
          <circle cx="33" cy="36" r="30.500" />
          <rect x="21.500" y="24.500" width="23" height="23" rx="2" transform="rotate(45 33 36)" />
        </svg>
        理财
      </NavItem>
      <NavItem>
        <svg width="66" height="68" viewBox="0 0 66 68" {...stroke}>
          <circle cx="33" cy="36" r="29" />
          <path d="M25 21L33 32L41 21M21 32H45M21 41H45M33 32V52" />
        </svg>
        交易
      </NavItem>
      <HomeBar />
    </BottomNav>
  </Screen>
);

export default App;
